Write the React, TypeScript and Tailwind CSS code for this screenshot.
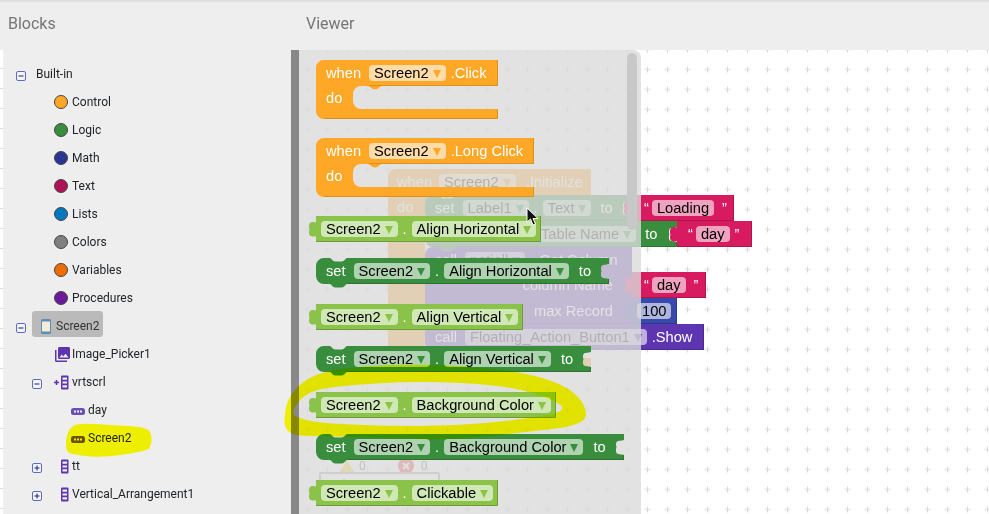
import type { ReactNode } from 'react';

// page x of the workspace's left edge and y of its top edge
const CANVAS_X = 299;
const CANVAS_Y = 50;

const LIGHT = { fill: '#8bc34a', edge: '#6f9c3b' };
const GREEN = { fill: '#388e3c', edge: '#2d7230' };
const ORANGE = { fill: '#ffa726', edge: '#dc9020' };
const PINK = { fill: '#d81b60', edge: '#ad164d' };
const BLUE = { fill: '#3949ab', edge: '#2e3a89' };
const PURPLE = { fill: '#5e35b1', edge: '#4b2a8e' };

type Tone = { fill: string; edge: string };

function valuePath(w: number) {
  return `M0 0H${w}V26H0V20C-2 21 -5 20.5 -6 19.5C-7.5 18 -7 15 -6.5 13.5C-7.2 12 -7.5 9 -6 7C-5 6 -2 5.5 0 6.5Z`;
}

function statementPath(w: number, h: number, socket: boolean) {
  const right = socket
    ? `V6C${w - 3} 7 ${w - 6} 6.5 ${w - 7} 7.5C${w - 8.5} 9 ${w - 8} 12 ${w - 7.5} 13C${w - 8.2} 15 ${w - 8.5} 18 ${w - 7} 19.5C${w - 6} 20.5 ${w - 3} 20 ${w} 21V${h}`
    : `V${h}`;
  return `M8 0H14C15 0 17 3.5 19 3.5H26C28 3.5 30 0 31 0H${w}${right}H31C30 ${h} 28 ${h + 3.5} 26 ${h + 3.5}H19C17 ${h + 3.5} 15 ${h} 14 ${h}H8A8 8 0 0 1 0 ${h - 8}V8A8 8 0 0 1 8 0Z`;
}

function eventPath(w: number, mouth: number, stem: number) {
  const low = 26 + mouth;
  return `M8 0H${w}V26H${stem + 29}C${stem + 27} 26 ${stem + 25} 29.5 ${stem + 22} 29.5C${stem + 19} 29.5 ${stem + 17} 26 ${stem + 14} 26H${stem + 8}A8 8 0 0 0 ${stem} 34V${low - 8}A8 8 0 0 0 ${stem + 8} ${low}H${w}V${low + 10}H8A8 8 0 0 1 0 ${low + 2}V8A8 8 0 0 1 8 0Z`;
}

function smooth(points: number[][]) {
  const mid = (a: number[], b: number[]) => `${(a[0] + b[0]) / 2} ${(a[1] + b[1]) / 2}`;
  let d = `M${mid(points[points.length - 1], points[0])}`;
  points.forEach((p, i) => {
    d += `Q${p[0]} ${p[1]} ${mid(p, points[(i + 1) % points.length])}`;
  });
  return d + 'Z';
}

const RING_OUTER = [[285, 404], [298, 385], [318, 373], [352, 367], [408, 364], [485, 367], [535, 375], [568, 387], [586, 405], [586, 425], [518, 433], [452, 440], [385, 438], [318, 436], [284, 435]];
const RING_INNER = [[292, 411], [305, 393], [335, 386], [418, 381], [502, 385], [548, 397], [570, 411], [518, 420], [452, 426], [385, 426], [318, 423], [295, 417]];
const TREE_BLOB = [[66, 437], [70, 428], [78, 423], [110, 425], [146, 427], [152, 434], [151, 446], [147, 451], [100, 458], [70, 454], [66, 450]];

function Pill({ text, arrow }: { text: string; arrow?: string }) {
  return (
    <span className="flex h-4 shrink-0 items-center rounded-[4px] bg-white/60 px-[5px] text-black">
      {text}
      {arrow && (
        <svg width="8" height="8" viewBox="0 0 8 8" className="relative top-px ml-1">
          <path d="M0 0H8L4 8Z" fill={arrow} />
        </svg>
      )}
    </span>
  );
}

function Dot() {
  return <span className="w-[14px] shrink-0 text-center">.</span>;
}

// a block is absolute when it sits on the workspace (x, y), in flow when it is listed in the flyout
function Block({
  x,
  y,
  w,
  h = 26,
  tone,
  path,
  edge,
  className = '',
  children,
}: {
  x?: number;
  y?: number;
  w: number;
  h?: number;
  tone: Tone;
  path: string;
  edge?: string;
  className?: string;
  children: ReactNode;
}) {
  const placed = x !== undefined && y !== undefined;
  return (
    <div
      className={`${placed ? 'absolute' : 'relative shrink-0'} ${className}`}
      style={placed ? { left: x - CANVAS_X, top: y - CANVAS_Y, width: w } : { width: w, height: h }}
    >
      <svg width={w} height={h} className="absolute left-0 top-0 overflow-visible">
        <path d={path} fill={tone.fill} />
        <path d={edge ?? `M0 ${h - 0.5}H${w - 0.5}V0`} fill="none" stroke={tone.edge} />
      </svg>
      <div className="relative flex h-[26px] items-center whitespace-nowrap font-['Liberation_Sans',sans-serif] text-[14.67px] leading-none text-white">
        {children}
      </div>
    </div>
  );
}

function Getter({ w, prop, className }: { w: number; prop: string; className: string }) {
  return (
    <Block w={w} tone={LIGHT} path={valuePath(w)} className={className}>
      <span className="w-[5px]" />
      <Pill text="Screen2" arrow={LIGHT.fill} />
      <Dot />
      <Pill text={prop} arrow={LIGHT.fill} />
    </Block>
  );
}

function Setter({ w, prop, className }: { w: number; prop: string; className: string }) {
  return (
    <Block w={w} tone={GREEN} path={statementPath(w, 26, true)} edge={`M31 25.5H${w - 0.5}V21`} className={className}>
      <span className="ml-[10px] mr-2">set</span>
      <Pill text="Screen2" arrow={GREEN.fill} />
      <Dot />
      <Pill text={prop} arrow={GREEN.fill} />
      <span className="ml-[10px]">to</span>
    </Block>
  );
}

function When({ w, action, className = '' }: { w: number; action: string; className?: string }) {
  const path = eventPath(w, 23, 37);
  return (
    <Block w={w} h={59} tone={ORANGE} path={path} edge={`M8 58.5H${w - 0.5}V49M${w - 0.5} 26V0M53 25.5H${w}`} className={className}>
      <span className="ml-[10px] mr-2">when</span>
      <Pill text="Screen2" arrow={ORANGE.fill} />
      <span className="ml-[5px]">{action}</span>
      <span className="absolute left-[10px] top-[31px]">do</span>
    </Block>
  );
}

function Grid() {
  return (
    <svg className="absolute inset-0 h-full w-full">
      <defs>
        <pattern id="plus" width="20" height="20" patternUnits="userSpaceOnUse" x="-1" y="9.5">
          <path d="M6.5 10h6M9.5 7v6" stroke="#d8d8d8" strokeWidth="1" fill="none" />
        </pattern>
      </defs>
      <rect width="100%" height="100%" fill="url(#plus)" />
    </svg>
  );
}

function Flyout() {
  return (
    <div className="absolute left-0 top-0 flex h-full w-[342px] flex-col items-start rounded-tr-lg bg-[#dbdbdb]/80 pl-[17px] pt-[10px]">
      <div className="absolute left-[328px] top-[3px] h-[177px] w-[10px] rounded-[5px] bg-[#c8c8c8]" />
      <When w={182} action=".Click" />
      <When w={218} action=".Long Click" className="mt-[19px]" />
      <Getter w={225} prop="Align Horizontal" className="mt-[19px]" />
      <Setter w={293} prop="Align Horizontal" className="mt-4" />
      <Getter w={207} prop="Align Vertical" className="mt-5" />
      <Setter w={275} prop="Align Vertical" className="mt-4" />
      <Getter w={240} prop="Background Color" className="mt-5" />
      <Setter w={308} prop="Background Color" className="mt-4" />
      <Getter w={182} prop="Clickable" className="mt-5" />
    </div>
  );
}

function Canvas() {
  return (
    <div className="relative h-[464px] min-w-0 flex-1 overflow-hidden bg-white">
      <Grid />

      {/* blocks on the workspace, behind the flyout */}
      <Block x={388} y={169} w={203} h={199} tone={ORANGE} path={eventPath(203, 163, 37)} edge="M0 0">
        <span className="ml-[9px] mr-[7px]">when</span>
        <Pill text="Screen2" arrow={ORANGE.fill} />
        <span className="ml-[10px]">.Initialize</span>
        <span className="absolute left-[9px] top-[31px]">do</span>
      </Block>
      <Block x={425} y={195} w={206} tone={GREEN} path={statementPath(206, 26, true)} edge="M31 25.5H205.5">
        <span className="ml-[10px] mr-2">set</span>
        <Pill text="Label1" arrow={GREEN.fill} />
        <Dot />
        <Pill text="Text" arrow={GREEN.fill} />
        <span className="ml-[9px]">to</span>
      </Block>
      <Block x={425} y={221} w={252} tone={GREEN} path={statementPath(252, 26, true)} edge="M31 25.5H251.5V21">
        <span className="ml-[10px] w-[101px]">set</span>
        <Pill text="Table Name" arrow={GREEN.fill} />
        <span className="ml-[9px]">to</span>
      </Block>
      <Block x={425} y={247} w={207} h={77} tone={PURPLE} path={statementPath(207, 77, false)} edge="M31 76.5H206.5">
        <span className="ml-[10px] mr-2">call</span>
        <Pill text="patioll" arrow={PURPLE.fill} />
        <span className="ml-[10px]">.Get Column</span>
        <span className="absolute right-[19px] top-[31px]">column Name</span>
        <span className="absolute right-[19px] top-[57px]">max Record</span>
      </Block>
      <Block x={425} y={324} w={279} tone={PURPLE} path={statementPath(279, 26, false)} edge="M31 25.5H278.5V0">
        <span className="ml-[10px] mr-2">call</span>
        <Pill text="Floating_Action_Button1" arrow={PURPLE.fill} />
        <span className="ml-[5px]">.Show</span>
      </Block>
      <Block x={631} y={195} w={103} tone={PINK} path={valuePath(103)}>
        <span className="ml-[13px] mr-[3px]">“</span>
        <Pill text="Loading" />
        <span className="ml-2">”</span>
      </Block>
      <Block x={677} y={221} w={75} tone={PINK} path={valuePath(75)}>
        <span className="ml-[11px] mr-[3px]">“</span>
        <Pill text="day" />
        <span className="ml-[5px]">”</span>
      </Block>
      <Block x={632} y={272} w={74} tone={PINK} path={valuePath(74)}>
        <span className="ml-3 mr-[3px]">“</span>
        <Pill text="day" />
        <span className="ml-2">”</span>
      </Block>
      <Block x={632} y={298} w={45} tone={BLUE} path={valuePath(45)}>
        <span className="w-[5px]" />
        <Pill text="100" />
      </Block>

      {/* warning counters under the viewer, mostly hidden */}
      <div className="absolute left-5 top-[409px] flex w-[121px] flex-col items-stretch font-['Roboto',sans-serif] text-[12px] text-[#555]">
        <div className="flex h-[13px] items-center pl-[21px]">
          <svg width="14" height="12" viewBox="0 0 14 12">
            <path d="M7 0L14 12H0Z" fill="#f5c518" />
          </svg>
          <span className="ml-[5px]">0</span>
          <svg width="16" height="16" viewBox="0 0 16 16" className="ml-[32px]">
            <circle cx="8" cy="8" r="8" fill="#e53935" />
            <path d="M5 5l6 6M11 5l-6 6" stroke="#fff" strokeWidth="2" />
          </svg>
          <span className="ml-[7px]">0</span>
        </div>
        <div className="flex h-7 justify-center rounded-[2px] border-2 border-[#999] pt-px text-[13px] text-[#444]">Show Warnings</div>
      </div>

      <Flyout />
    </div>
  );
}

function Expander({ open }: { open: boolean }) {
  return (
    <svg width="10" height="10" viewBox="0 0 10 10" className="mt-[3px] shrink-0">
      <rect x="0.5" y="0.5" width="9" height="9" rx="1.5" fill="#f4f4f8" stroke="#5c6bc0" />
      <path d={open ? 'M2.5 5h5' : 'M2.5 5h5M5 2.5v5'} stroke="#1a237e" strokeWidth="1" />
    </svg>
  );
}

function Swatch({ color }: { color: string }) {
  return <span className="mr-1 h-[14px] w-[14px] shrink-0 rounded-full border border-[#444]" style={{ backgroundColor: color }} />;
}

function TextboxIcon() {
  return (
    <svg width="14" height="7" viewBox="0 0 14 7" className="mr-[3px] mt-[2px] shrink-0">
      <rect width="14" height="7" rx="2.5" fill="currentColor" />
      <path d="M3 2.5h2v2H3zM6 2.5h2v2H6zM9 2.5h2v2H9z" fill="#eee" />
    </svg>
  );
}

function ArrangementIcon({ plus }: { plus?: boolean }) {
  return (
    <svg width="15" height="15" viewBox="0 0 15 15" className="mr-[3px] shrink-0">
      {plus && <path d="M0 7.5h5M2.5 5v5" stroke="currentColor" strokeWidth="1.5" />}
      <rect x="7" y="0.5" width="7.5" height="14" rx="1" fill="currentColor" />
      <path d="M8.5 2.5h4.5v2.2H8.5zM8.5 6.4h4.5v2.2H8.5zM8.5 10.3h4.5v2.2H8.5z" fill="#eee" />
    </svg>
  );
}

function Tree() {
  const categories = [
    ['Control', '#ffa726'],
    ['Logic', '#388e3c'],
    ['Math', '#283593'],
    ['Text', '#ad1457'],
    ['Lists', '#0277bd'],
    ['Colors', '#808080'],
    ['Variables', '#ef6c00'],
    ['Procedures', '#6a1b9a'],
  ];
  const row = 'flex h-7 items-center';
  return (
    <div className="w-[288px] shrink-0 bg-[#eee] pt-[10px] font-['Roboto',sans-serif] text-[12px] leading-none text-[#212529]">
      <div className={`${row} pl-[13px]`}>
        <Expander open />
        <span className="ml-[10px]">Built-in</span>
      </div>
      {categories.map(([label, color]) => (
        <div key={label} className={`${row} pl-[51px]`}>
          <Swatch color={color} />
          {label}
        </div>
      ))}
      <div className={`${row} pl-[13px]`}>
        <Expander open />
        <div className="-mt-1 ml-[6px] box-border flex h-[26px] w-[71px] items-center rounded-[3px] bg-[#bababa] pl-[9px] pt-1 text-[#333]">
          <svg width="10" height="15" viewBox="0 0 10 15" className="mr-[5px]">
            <rect width="10" height="15" rx="1.5" fill="#5b8fb9" />
            <rect x="1" y="2.5" width="8" height="10" fill="#f3ecd8" />
          </svg>
          Screen2
        </div>
      </div>
      <div className={`${row} pl-[52px] text-[#5e35b1]`}>
        <svg width="15" height="15" viewBox="2 2 20 20" className="mr-[2px]">
          <path
            fill="currentColor"
            d="M22 16V4c0-1.1-.9-2-2-2H8c-1.1 0-2 .9-2 2v12c0 1.1.9 2 2 2h12c1.1 0 2-.9 2-2zm-11-4l2.03 2.71L16 11l4 5H8l3-4zM2 6v14c0 1.1.9 2 2 2h14v-2H4V6H2z"
          />
        </svg>
        <span className="text-[#212529]">Image_Picker1</span>
      </div>
      <div className={`${row} pl-[29px] text-[#5e35b1]`}>
        <Expander open />
        <span className="w-[12px]" />
        <ArrangementIcon plus />
        <span className="text-[#212529]">vrtscrl</span>
      </div>
      <div className={`${row} pl-[68px] text-[#6a4fb5]`}>
        <TextboxIcon />
        <span className="text-[#212529]">day</span>
      </div>
      <div className={`${row} pl-[68px] text-[#6a4fb5]`}>
        <TextboxIcon />
        <span className="text-[#212529]">Screen2</span>
      </div>
      <div className={`${row} pl-[29px] text-[#5e35b1]`}>
        <Expander open={false} />
        <span className="w-[12px]" />
        <ArrangementIcon />
        <span className="text-[#212529]">tt</span>
      </div>
      <div className={`${row} pl-[29px] text-[#5e35b1]`}>
        <Expander open={false} />
        <span className="w-[12px]" />
        <ArrangementIcon />
        <span className="text-[#212529]">Vertical_Arrangement1</span>
      </div>
    </div>
  );
}

export default function App() {
  return (
    <div className="relative flex h-[514px] w-[989px] flex-col overflow-hidden bg-white">
      <div className="h-[50px] shrink-0 bg-[#eee]">
        <div className="h-[3px] bg-gradient-to-b from-[#dadada] to-[#eee]" />
        <div className="flex h-[41px] items-center font-['Roboto',sans-serif] text-base text-[#757575]">
          <span className="ml-2 w-[298px]">Blocks</span>
          <span>Viewer</span>
        </div>
      </div>
      <div className="flex min-h-0 flex-1">
        <div className="w-[3px] shrink-0 bg-[repeating-linear-gradient(to_bottom,transparent_0,transparent_18px,#dcdcdc_18px,#dcdcdc_19px,transparent_19px,transparent_20px)]" />
        <Tree />
        <div className="w-2 shrink-0 bg-[#888]" />
        <Canvas />
      </div>

      {/* hand-drawn yellow marker on top of the screenshot */}
      <svg className="pointer-events-none absolute inset-0 mix-blend-multiply" width="989" height="514">
        <path d={smooth(RING_OUTER) + smooth(RING_INNER)} fill="#ffff00" fillRule="evenodd" />
        <path d={smooth(TREE_BLOB)} fill="#ffff00" />
      </svg>

      {/* mouse pointer */}
      <svg className="pointer-events-none absolute left-[526px] top-[207px]" width="14" height="20" viewBox="0 0 14 20">
        <path d="M1 1V15L4.5 12L7 18L9.5 17L7 11.5H12Z" fill="#111" stroke="#fff" strokeWidth="1" />
      </svg>
    </div>
  );
}
